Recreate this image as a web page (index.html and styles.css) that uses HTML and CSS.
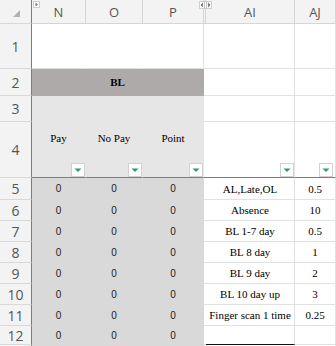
FILE: index.html
```html
<!DOCTYPE html>
<html lang="en">
<head>
    <meta charset="UTF-8">
    <meta name="viewport" content="width=device-width, initial-scale=1.0">
    <title>BL Points</title>
    <link rel="stylesheet" href="styles.css">
</head>
<body>
    <div class="sheet">
        <!-- column headers -->
        <div class="corner">
            <svg width="7" height="7" viewBox="0 0 7 7"><path d="M7 0V7H0Z" fill="#b3b3b3"/></svg>
        </div>
        <div class="ch">N
            <svg class="unhide unhide-n" width="7" height="7" viewBox="0 0 7 7">
                <rect x="0.5" y="0.5" width="6" height="6" fill="#fff" stroke="#cfcfcf"/>
                <path d="M2.5 1.5L5 3.5L2.5 5.5Z" fill="#777"/>
            </svg>
        </div>
        <div class="ch">O</div>
        <div class="ch">P</div>
        <div class="ch ch-gap">
            <svg class="unhide unhide-ai" width="13" height="8" viewBox="0 0 13 8">
                <rect x="0.5" y="0.5" width="12" height="7" fill="#fff" stroke="#cfcfcf"/>
                <path d="M4 1.5V6.5L1.5 4Z" fill="#777"/>
                <path d="M9 1.5V6.5L11.5 4Z" fill="#777"/>
                <path d="M5.5 0V8M7.5 0V8" stroke="#c4c4c4"/>
            </svg>
        </div>
        <div class="ch">AI</div>
        <div class="ch">AJ</div>

        <!-- row 1 -->
        <div class="rh">1</div>
        <div class="c plain"></div>
        <div class="c plain"></div>
        <div class="c"></div>
        <div class="c gap"></div>
        <div class="c"></div>
        <div class="c"></div>

        <!-- row 2 -->
        <div class="rh">2</div>
        <div class="c group">BL</div>
        <div class="c gap"></div>
        <div class="c"></div>
        <div class="c"></div>

        <!-- rows 3-4 -->
        <div class="rh">3</div>
        <div class="c title">Pay<span class="filter"><svg width="14" height="14" viewBox="0 0 14 14"><path d="M3.5 5.5H10.5L7 9Z"/></svg></span></div>
        <div class="c title">No Pay<span class="filter"><svg width="14" height="14" viewBox="0 0 14 14"><path d="M3.5 5.5H10.5L7 9Z"/></svg></span></div>
        <div class="c title">Point<span class="filter"><svg width="14" height="14" viewBox="0 0 14 14"><path d="M3.5 5.5H10.5L7 9Z"/></svg></span></div>
        <div class="c gap"></div>
        <div class="c"></div>
        <div class="c"></div>

        <div class="rh">4</div>
        <div class="c gap frozen"></div>
        <div class="c frozen"><span class="filter"><svg width="14" height="14" viewBox="0 0 14 14"><path d="M3.5 5.5H10.5L7 9Z"/></svg></span></div>
        <div class="c frozen"><span class="filter filter-aj"><svg width="14" height="14" viewBox="0 0 14 14"><path d="M3.5 5.5H10.5L7 9Z"/></svg></span></div>

        <!-- data -->
        <div class="rh">5</div>
        <div class="c num">0</div><div class="c num">0</div><div class="c num">0</div>
        <div class="c gap"></div>
        <div class="c">AL,Late,OL</div>
        <div class="c">0.5</div>

        <div class="rh">6</div>
        <div class="c num">0</div><div class="c num">0</div><div class="c num">0</div>
        <div class="c gap"></div>
        <div class="c">Absence</div>
        <div class="c">10</div>

        <div class="rh">7</div>
        <div class="c num">0</div><div class="c num">0</div><div class="c num">0</div>
        <div class="c gap"></div>
        <div class="c">BL 1-7 day</div>
        <div class="c">0.5</div>

        <div class="rh">8</div>
        <div class="c num">0</div><div class="c num">0</div><div class="c num">0</div>
        <div class="c gap"></div>
        <div class="c">BL 8 day</div>
        <div class="c">1</div>

        <div class="rh">9</div>
        <div class="c num">0</div><div class="c num">0</div><div class="c num">0</div>
        <div class="c gap"></div>
        <div class="c">BL 9 day</div>
        <div class="c">2</div>

        <div class="rh">10</div>
        <div class="c num">0</div><div class="c num">0</div><div class="c num">0</div>
        <div class="c gap"></div>
        <div class="c">BL 10 day up</div>
        <div class="c">3</div>

        <div class="rh">11</div>
        <div class="c num">0</div><div class="c num">0</div><div class="c num">0</div>
        <div class="c gap"></div>
        <div class="c">Finger scan 1 time</div>
        <div class="c">0.25</div>

        <div class="rh">12</div>
        <div class="c num">0</div><div class="c num">0</div><div class="c num">0</div>
        <div class="c gap"></div>
        <div class="c last"></div>
        <div class="c"></div>

        <div class="rh"></div>
        <div class="c num"></div><div class="c num"></div><div class="c num"></div>
        <div class="c gap"></div>
        <div class="c"></div>
        <div class="c"></div>
    </div>
</body>
</html>
```

FILE: styles.css
```css
body {
    margin: 0;
    overflow: hidden;
    background: #fff;
}
.sheet {
    display: grid;
    grid-template-columns: 32px 54px 57px 61px 2px 89px 41px;
    grid-template-rows: 24px 45px 27px 26px 56px 22px repeat(6, 21px) 19px 21px;
    width: 336px;
    font-family: "Liberation Serif", serif;
    font-size: 11px;
    color: #000;
}
.sheet > div {
    box-sizing: border-box;
    position: relative;
    display: flex;
    align-items: center;
    justify-content: center;
    white-space: nowrap;
    background: #fff;
    border-right: 1px solid #e1e1e1;
    border-bottom: 1px solid #e1e1e1;
}
.corner,
.rh {
    background: #f3f3f3 !important;
    border-right-color: #3a9f71 !important;
    border-bottom-color: #d9d9d9 !important;
    font-family: "Open Sans", sans-serif;
    font-size: 14px;
    color: #555;
}
.corner {
    align-items: flex-start !important;
    justify-content: flex-start !important;
    padding: 10px 0 0 13px;
}
.ch {
    background: #f3f3f3 !important;
    border-color: #d6d6d6 !important;
    font-family: "Open Sans", sans-serif;
    font-size: 13px;
    color: #555;
}
.unhide {
    position: absolute;
    top: 1px;
}
.unhide-n {
    left: 1px;
}
.unhide-ai {
    left: -5px;
    z-index: 1;
}
.plain {
    border-right-color: #fff !important;
}
.gap {
    border-right: none !important;
}
.group {
    grid-column: span 3;
    background: #aeaaaa !important;
    border-color: #aeaaaa !important;
    font-weight: bold;
}
.title {
    grid-row: span 2;
    background: #e7e6e6 !important;
    border-right-color: #e7e6e6 !important;
    border-bottom-color: #3a9f71 !important;
    padding-top: 2px;
}
.frozen {
    border-bottom-color: #3a9f71 !important;
}
.filter {
    position: absolute;
    right: 0;
    bottom: 0;
    width: 14px;
    height: 14px;
    box-sizing: border-box;
    background: #fff;
    border: 1px solid #d2d2d2;
}
.filter svg {
    display: block;
    margin: -1px;
    fill: #2f9b6a;
}
.filter-aj {
    right: 2px;
}
.num {
    background: #d9d9d9 !important;
    border-color: #d9d9d9 !important;
    font-family: "Liberation Sans", sans-serif;
    font-size: 10px;
    color: #222;
}
.last {
    border-bottom-color: #111 !important;
}
```
